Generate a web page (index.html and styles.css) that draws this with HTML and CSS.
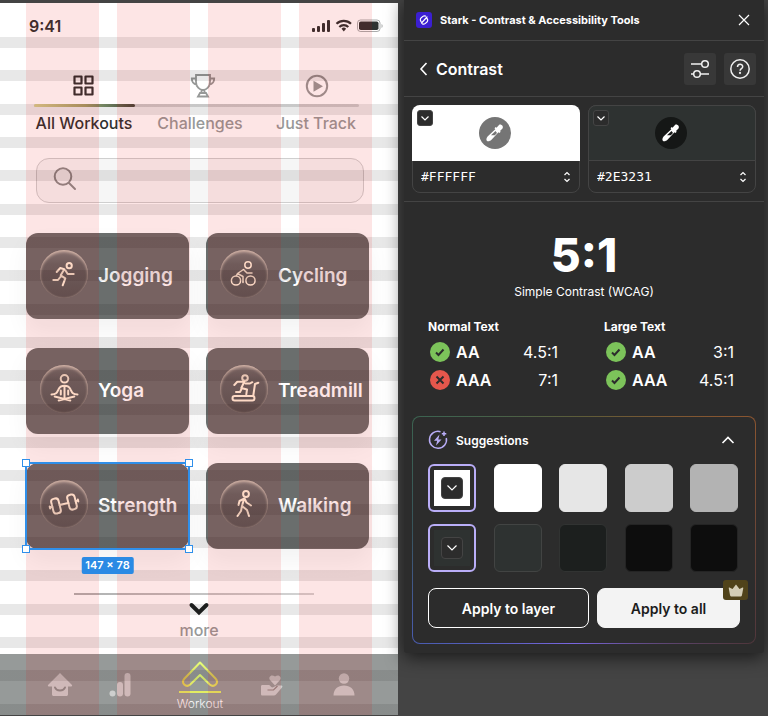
FILE: index.html
```html
<!DOCTYPE html>
<html lang="en">
<head>
  <meta charset="UTF-8" />
  <meta name="viewport" content="width=device-width, initial-scale=1.0"/>
  <title>Stark - Contrast &amp; Accessibility Tools</title>
  <link rel="stylesheet" href="styles.css">
</head>
<body>
  <main class="phone">
    <header class="status">
      <span>9:41</span>
      <svg class="status-icons" width="72" height="14" viewBox="0 0 72 14">
        <g fill="#2e3231">
          <rect x="0" y="9" width="3" height="4" rx="1"/>
          <rect x="5" y="7" width="3" height="6" rx="1"/>
          <rect x="10" y="4" width="3" height="9" rx="1"/>
          <rect x="15" y="1" width="3" height="12" rx="1"/>
        </g>
        <g fill="none" stroke="#2e3231" stroke-width="2.2">
          <path d="M24.500 4.800a10.500 10.500 0 0 1 14.500 0"/>
          <path d="M27.300 8a6.500 6.500 0 0 1 9 0"/>
        </g>
        <path d="M29.500 9.800a3.200 3.200 0 0 1 4.600 0L31.800 12.500z" fill="#2e3231"/>
        <rect x="45.500" y="1" width="22.500" height="11.500" rx="3" fill="none" stroke="#2e3231" opacity=".4"/>
        <rect x="47" y="2.500" width="19.500" height="8.500" rx="1.800" fill="#2e3231"/>
        <path d="M69.500 5v4c1.600-.7 1.600-3.300 0-4z" fill="#2e3231" opacity=".4"/>
      </svg>
    </header>

    <nav class="tabs">
      <a href="#" class="tab active">
        <svg width="24" height="24" viewBox="0 0 24 24" fill="none" stroke="currentColor" stroke-width="2.200">
          <path d="M2.500 2.500h7v7h-7zM13.500 2.500h7v7h-7zM2.500 13.500h7v7h-7zM13.500 13.500h7v7h-7z" stroke-linejoin="round"/>
        </svg>
        All Workouts
      </a>
      <a href="#" class="tab">
        <svg width="24" height="24" viewBox="-2 0 24 24" fill="none" stroke="currentColor" stroke-width="1.800">
          <path d="M6 1h14v7c0 5-4 8-7 8s-7-3-7-8zM6 4.500H1.800c0 3.500 1.500 5.500 5 6M20 4.500h4.200c0 3.500-1.500 5.500-5 6M12 16l-1 3M14 16l1 3M10 19h6l2 3.500H8z"/>
        </svg>
        Challenges
      </a>
      <a href="#" class="tab">
        <svg width="24" height="24" viewBox="0 0 24 24">
          <circle cx="13" cy="12" r="10.200" fill="none" stroke="currentColor" stroke-width="2"/>
          <path d="M9.500 6.800v11l9.500-5.500z" fill="currentColor"/>
        </svg>
        Just Track
      </a>
      <div class="track"><div class="track-fill"></div></div>
    </nav>

    <div class="search">
      <svg width="24" height="24" viewBox="0 0 24 24" fill="none" stroke="#8b8c8b" stroke-width="2" stroke-linecap="round">
        <circle cx="10" cy="9.500" r="8.300"/>
        <path d="M16 16l6 6"/>
      </svg>
      <input type="text" aria-label="Search workouts">
    </div>

    <section class="cards">
      <article class="card">
        <span class="disc">
          <svg width="28" height="28" viewBox="0 0 28 28">
            <circle cx="19.200" cy="5.700" r="2.600"/>
            <path d="M6.700 12l3.600-4 4 1.300-3.600 6 4.600 3-2.600 7M15.500 10.500l2.200 3.500h6M3.300 20H8l2.300-3"/>
          </svg>
        </span>
        <h2>Jogging</h2>
      </article>
      <article class="card">
        <span class="disc">
          <svg class="thin" width="28" height="28" viewBox="0 0 28 28">
            <circle cx="18" cy="5" r="3.200"/>
            <circle cx="6" cy="20.500" r="4.600"/>
            <circle cx="20.500" cy="20.500" r="4.600"/>
            <path d="M22 13h-5l-3.500-3.500-6 4 5.500 3v6M7.500 13.500l-1 2"/>
          </svg>
        </span>
        <h2>Cycling</h2>
      </article>
      <article class="card">
        <span class="disc">
          <svg width="28" height="28" viewBox="0 0 28 28">
            <circle cx="14.500" cy="3.800" r="3.800"/>
            <path d="M1.500 19.500c5 0 5.500-2 7-5.200 1-2.500 2.500-3.600 6-3.600s5 1.100 6 3.600c1.500 3.200 2 5.200 7 5.200M14.500 11v12M10.800 15.500v4M18.200 15.500v4M4.700 21.500l15.600 4M24.300 21.500l-15.600 4"/>
          </svg>
        </span>
        <h2>Yoga</h2>
      </article>
      <article class="card">
        <span class="disc">
          <svg width="28" height="28" viewBox="0 0 28 28">
            <circle cx="15" cy="3" r="2.800"/>
            <path d="M4.300 10l3-3.200h7l-3 6.200 5.700 1.500-.7 4.800M15.500 8.500h4.500l2.300-1.300M6 17h4l1.500-3M28.300 7.700L25 9l-1.700 11.500"/>
            <rect x="2.500" y="21" width="22" height="4.500" rx="2.200"/>
          </svg>
        </span>
        <h2>Treadmill</h2>
      </article>
      <article class="card selected">
        <span class="disc">
          <svg width="30" height="28" viewBox="0 0 30 28">
            <g transform="rotate(-14 15 14)">
              <rect x="3" y="6.500" width="7.500" height="15" rx="3"/>
              <rect x="19.500" y="6.500" width="7.500" height="15" rx="3"/>
              <path d="M10.500 14h9M.5 13v2M.5 14H3M27 14h2.500M29.500 13v2"/>
            </g>
          </svg>
        </span>
        <h2>Strength</h2>
        <div class="selection">
          <i class="handle"></i><i class="handle"></i><i class="handle"></i><i class="handle"></i>
          <span class="size">147 × 78</span>
        </div>
      </article>
      <article class="card">
        <span class="disc">
          <svg width="28" height="28" viewBox="0 0 28 28">
            <circle cx="16" cy="4" r="2.900"/>
            <path d="M8.500 15l1-4 5-2.500 2 4 4.500 3M14 9l-2 7 5 4 2 6M12 16l-1 5-3.500 5"/>
          </svg>
        </span>
        <h2>Walking</h2>
      </article>
    </section>

    <div class="more">
      <hr>
      <a href="#">
        <svg width="20" height="14" viewBox="0 0 20 14" fill="none" stroke="#1f2221" stroke-width="4" stroke-linecap="round">
          <path d="M2.500 3l7.500 7.500L17.500 3"/>
        </svg>
        more
      </a>
    </div>

    <nav class="bottom">
      <a href="#" aria-label="Home">
        <svg width="24" height="24" viewBox="0 0 24 24">
          <path d="M12 0L24 12c.5 1-.5 1.500-1.500 1.500H20V21c0 1.500-.5 2-2 2H6c-1.500 0-2-.5-2-2v-7.500H1.500C.5 13.500-.5 13 0 12z" fill="currentColor"/>
          <path d="M7 14.500c1.500 4 8.500 4 10 0" fill="none" stroke="#8b8e8d" stroke-width="2" stroke-linecap="round"/>
        </svg>
      </a>
      <a href="#" aria-label="Progress">
        <svg width="24" height="24" viewBox="0 0 24 24" fill="currentColor">
          <circle cx="4.500" cy="20.500" r="3"/>
          <rect x="9" y="9" width="6" height="14.500" rx="3"/>
          <rect x="16.500" y="0" width="6" height="23.500" rx="3"/>
        </svg>
      </a>
      <a href="#" class="workout">
        <svg width="44" height="32" viewBox="0 0 44 32" fill="none" stroke="url(#lime)" stroke-width="2">
          <defs>
            <linearGradient id="lime" gradientUnits="userSpaceOnUse" x1="4" y1="0" x2="40" y2="0">
              <stop offset="0" stop-color="#e0d050"/>
              <stop offset=".5" stop-color="#e4ff78"/>
              <stop offset="1" stop-color="#e2da58"/>
            </linearGradient>
          </defs>
          <path d="M22 1.500l15.500 16c2 2.200 1.800 4.500.3 6-1.700 1.700-4 1.800-6 0L22 14l-9.800 9.500c-2 1.800-4.300 1.700-6 0-1.500-1.500-1.700-3.800.3-6z" stroke-linejoin="round"/>
          <rect x="1" y="30" width="42" height="2" fill="#e2ee62" stroke="none"/>
        </svg>
        Workout
      </a>
      <a href="#" aria-label="Wellbeing">
        <svg width="24" height="24" viewBox="0 0 24 24" fill="currentColor">
          <path d="M15 12.500L10 7C8 4.500 11 .5 15 3.500 19 .5 22 4.500 20 7z"/>
          <path d="M2.500 12H9c1.500 0 1.500 2.500 3.500 2.500L17 12.500h4.500c1 0 1.200 1 .5 2l-6 7c-.8.800-1.500 1-2.500 1h-11c-1 0-1.500-.5-1.500-1.500v-7.500c0-1 .5-1.500 1.500-1.500z"/>
          <path d="M7.500 17h6l4-4" fill="none" stroke="#8f8584" stroke-width="1.200"/>
        </svg>
      </a>
      <a href="#" aria-label="Profile">
        <svg width="24" height="24" viewBox="0 0 24 24" fill="currentColor">
          <circle cx="12" cy="5.500" r="5.200"/>
          <path d="M1.500 22.500C1.500 16 6 12.500 12 12.500s10.500 3.500 10.500 10z"/>
        </svg>
      </a>
    </nav>

    <!-- layout grid drawn over the frame -->
    <div class="grid-rows"></div>
    <div class="grid-cols"><i></i><i></i><i></i><i></i></div>
  </main>

  <aside class="plugin">
    <header class="plugin-bar">
      <svg width="16" height="16" viewBox="0 0 16 16">
        <rect width="16" height="16" rx="3" fill="#3b1fd1"/>
        <path d="M5 9.500a2.600 2.600 0 0 1 .300-3.800l1.600-1.300a2.500 2.500 0 0 1 2.600-.3M5.500 11l5.500-6M11 6.500a2.600 2.600 0 0 1-.3 3.800l-1.600 1.300a2.500 2.500 0 0 1-2.600.3" fill="none" stroke="#fff" stroke-width="1.200" stroke-linecap="round"/>
      </svg>
      <h1>Stark - Contrast &amp; Accessibility Tools</h1>
      <button class="close" aria-label="Close">
        <svg width="12" height="12" viewBox="0 0 12 12" stroke="#fff" stroke-width="1.200"><path d="M1 1l10 10M11 1L1 11"/></svg>
      </button>
    </header>

    <div class="title-row">
      <button class="back">
        <svg width="8" height="12" viewBox="0 0 8 12" fill="none" stroke="#fff" stroke-width="1.600"><path d="M6.500 0L1 6l5.500 6"/></svg>
        Contrast
      </button>
      <button class="tool" aria-label="Settings">
        <svg width="20" height="20" viewBox="0 0 20 20" fill="none" stroke="#f0f0f0" stroke-width="1.500">
          <path d="M1 5h10M19 15H10M4 15H1"/><circle cx="15" cy="5" r="3.300"/><circle cx="7" cy="15" r="3.300"/>
        </svg>
      </button>
      <button class="tool" aria-label="Help">
        <svg width="20" height="20" viewBox="0 0 20 20" fill="none" stroke="#f0f0f0" stroke-width="1.500">
          <circle cx="10" cy="10" r="9.200"/>
          <path d="M7.500 8c0-3.500 5.200-3.500 5.200-.3 0 2-2.600 2-2.600 4"/>
          <circle cx="10" cy="14" r=".4"/>
        </svg>
      </button>
    </div>

    <div class="colors">
      <div class="color">
        <div class="sample light">
          <button class="drop" aria-label="Foreground options"><svg width="8" height="5" viewBox="0 0 8 5"><path d="M.5.500L4 4 7.500.500"/></svg></button>
          <button class="picker" aria-label="Pick foreground">
            <svg width="18" height="18" viewBox="0 0 18 18"><path d="M13 1c2-1.500 5 1.500 3.500 3.500L14 7l.7.800-1.200 1.200-1-.8-7 7.500c-1.500 1.500-3.700 2-4.700 1-.8-1-.4-3 1-4.500l7.500-7-.8-1L9.700 3l.8.700z" fill="#fff"/><path d="M9.500 7L5 11.300h3.800L11 9z" class="hole"/></svg>
          </button>
        </div>
        <div class="hex">
          <input type="text" value="#FFFFFF" aria-label="Foreground color">
          <svg width="8" height="12" viewBox="0 0 8 12"><path d="M1.500 4L4 1.500 6.500 4M1.500 8L4 10.500 6.500 8"/></svg>
        </div>
      </div>
      <div class="color">
        <div class="sample dark">
          <button class="drop" aria-label="Background options"><svg width="8" height="5" viewBox="0 0 8 5"><path d="M.5.500L4 4 7.500.500"/></svg></button>
          <button class="picker" aria-label="Pick background">
            <svg width="18" height="18" viewBox="0 0 18 18"><path d="M13 1c2-1.500 5 1.500 3.500 3.500L14 7l.7.800-1.200 1.200-1-.8-7 7.500c-1.500 1.500-3.700 2-4.700 1-.8-1-.4-3 1-4.500l7.500-7-.8-1L9.700 3l.8.700z" fill="#fff"/><path d="M9.500 7L5 11.300h3.800L11 9z" class="hole"/></svg>
          </button>
        </div>
        <div class="hex">
          <input type="text" value="#2E3231" aria-label="Background color">
          <svg width="8" height="12" viewBox="0 0 8 12"><path d="M1.500 4L4 1.500 6.500 4M1.500 8L4 10.500 6.500 8"/></svg>
        </div>
      </div>
    </div>

    <div class="score">
      <strong>5:1</strong>
      <p>Simple Contrast (WCAG)</p>
    </div>

    <div class="levels">
      <section>
        <h3>Normal Text</h3>
        <div class="level">
          <svg width="20" height="20" viewBox="0 0 20 20"><circle cx="10" cy="10" r="10" fill="#7cc35a"/><path d="M6 10.500l2.500 2.500 5-5.500"/></svg>
          <b>AA</b><span>4.5:1</span>
        </div>
        <div class="level">
          <svg width="20" height="20" viewBox="0 0 20 20"><circle cx="10" cy="10" r="10" fill="#e5574c"/><path d="M6.500 6.500l7 7M13.500 6.500l-7 7"/></svg>
          <b>AAA</b><span>7:1</span>
        </div>
      </section>
      <section>
        <h3>Large Text</h3>
        <div class="level">
          <svg width="20" height="20" viewBox="0 0 20 20"><circle cx="10" cy="10" r="10" fill="#7cc35a"/><path d="M6 10.500l2.500 2.500 5-5.500"/></svg>
          <b>AA</b><span>3:1</span>
        </div>
        <div class="level">
          <svg width="20" height="20" viewBox="0 0 20 20"><circle cx="10" cy="10" r="10" fill="#7cc35a"/><path d="M6 10.500l2.500 2.500 5-5.500"/></svg>
          <b>AAA</b><span>4.5:1</span>
        </div>
      </section>
    </div>

    <section class="suggestions">
      <button class="suggest-head">
        <svg width="20" height="20" viewBox="0 0 20 20" fill="none" stroke="#b9adf7" stroke-width="1.500">
          <path d="M12.500 1.700A8.500 8.500 0 1 0 18.300 8"/>
          <path d="M11.500 4.500L6 10.800h3.200L8 15.500l5.500-6h-3.200z" fill="#b9adf7" stroke="none"/>
          <path d="M16 1.500v4.500M13.800 3.700h4.500"/>
        </svg>
        Suggestions
        <svg class="fold" width="12" height="8" viewBox="0 0 12 8" fill="none" stroke="#fff" stroke-width="1.600"><path d="M.5 7L6 1.500 11.500 7"/></svg>
      </button>

      <div class="swatches">
        <button class="swatch current white" aria-label="Current foreground"><i><svg width="12" height="8" viewBox="0 0 12 8"><path d="M1.500 1.500L6 6l4.500-4.500"/></svg></i></button>
        <button class="swatch w1" aria-label="White"></button>
        <button class="swatch w2" aria-label="Gray 90"></button>
        <button class="swatch w3" aria-label="Gray 80"></button>
        <button class="swatch w4" aria-label="Gray 70"></button>
      </div>
      <div class="swatches">
        <button class="swatch current" aria-label="Current background"><i><svg width="12" height="8" viewBox="0 0 12 8"><path d="M1.500 1.500L6 6l4.500-4.500"/></svg></i></button>
        <button class="swatch d1" aria-label="Slate"></button>
        <button class="swatch d2" aria-label="Dark slate"></button>
        <button class="swatch d3" aria-label="Near black"></button>
        <button class="swatch d3" aria-label="Black"></button>
      </div>

      <div class="actions">
        <button class="apply">Apply to layer</button>
        <button class="apply solid">
          Apply to all
          <span class="crown">
            <svg width="16" height="13" viewBox="0 0 16 13"><path d="M1.500 3.500L4.500 5 8 .500 11.500 5l3-1.500c.5-.2.900.1.800.600L14 11c-.2 1-.8 1.500-1.700 1.500H3.700C2.800 12.500 2.200 12 2 11L.7 4.100c-.1-.5.300-.8.800-.6z" fill="#d3cdb6"/></svg>
          </span>
        </button>
      </div>
    </section>
  </aside>
</body>
</html>
```
FILE: styles.css
```css
* {
  box-sizing: border-box;
}

body {
  margin: 0;
  min-height: 100vh;
  display: flex;
  align-items: flex-start;
  background: #444;
  font-family: Inter, "Liberation Sans", sans-serif;
}

a {
  color: inherit;
  text-decoration: none;
}

button {
  padding: 0;
  border: none;
  background: none;
  color: inherit;
  font: inherit;
  cursor: pointer;
}

svg {
  display: block;
  flex: none;
  overflow: visible;
}

h1, h2, h3, p {
  margin: 0;
}

/* phone frame */
.phone {
  position: relative;
  isolation: isolate;
  flex: 1;
  margin-top: 3px;
  background: #fff;
  color: #2e3231;
}

.status {
  display: flex;
  justify-content: space-between;
  align-items: center;
  padding: 13px 14px 0 29px;
  font-size: 16px;
  line-height: 20px;
  font-weight: 600;
}

.tabs {
  position: relative;
  display: grid;
  grid-template-columns: repeat(3, 1fr);
  padding: 38px 24px 0 26px;
}

.tab {
  display: flex;
  flex-direction: column;
  align-items: center;
  gap: 15px;
  font-size: 16px;
  line-height: 20px;
  font-weight: 500;
  color: #979998;
  white-space: nowrap;
}

.tab.active {
  color: #2e3231;
}

.track {
  position: absolute;
  left: 34px;
  right: 39px;
  bottom: 26px;
  height: 3px;
  border-radius: 2px;
  background: #dcdcdc;
}

.track-fill {
  width: 31%;
  height: 3px;
  border-radius: 2px;
  background: linear-gradient(90deg, #e6e29c, #b0ac70 50%, #7a8f6a 70%, #4a4a3e);
}

.search {
  display: flex;
  align-items: center;
  gap: 12px;
  height: 45px;
  margin: 25px 34px 30px 36px;
  padding: 0 16px;
  border: 1px solid #cfcfcf;
  border-radius: 13px;
  background: #f6f6f6;
}

.search svg {
  margin-top: -4px;
}

.search input {
  flex: 1;
  min-width: 0;
  border: none;
  outline: none;
  background: none;
  font: inherit;
}

.cards {
  display: grid;
  grid-template-columns: 1fr 1fr;
  gap: 29px 17px;
  padding: 0 29px 0 26px;
}

.card {
  position: relative;
  display: flex;
  align-items: center;
  gap: 10px;
  height: 86px;
  padding: 0 6px 4px 14px;
  border-radius: 12px;
  background: #6a6e6d;
  box-shadow: 0 12px 24px rgba(0, 0, 0, 0.05);
  color: #fff;
}

.card h2 {
  padding-top: 4px;
  font-size: 19px;
  line-height: 24px;
  font-weight: 600;
}

.disc {
  display: flex;
  flex: none;
  align-items: center;
  justify-content: center;
  width: 48px;
  height: 48px;
  border-radius: 50%;
  background: linear-gradient(#7b7d7b, #626665 30%, #545857);
  box-shadow: inset 0 2px 3px rgba(255, 240, 220, 0.6), inset 0 0 2px rgba(255, 240, 220, 0.4);
}

.disc svg {
  fill: none;
  stroke: #fff2dc;
  stroke-width: 2;
  stroke-linecap: round;
  stroke-linejoin: round;
}

.disc .thin {
  stroke-width: 1.5;
}

.selection {
  position: absolute;
  inset: -1px;
  z-index: 2;
  border: 2px solid #2f8fea;
}

.handle {
  position: absolute;
  width: 8px;
  height: 8px;
  border: 1px solid #2f8fea;
  background: #fff;
}

.handle:nth-child(1) { top: -5px; left: -5px; }
.handle:nth-child(2) { top: -5px; right: -5px; }
.handle:nth-child(3) { bottom: -5px; left: -5px; }
.handle:nth-child(4) { bottom: -5px; right: -5px; }

.size {
  position: absolute;
  top: calc(100% + 9px);
  left: 50%;
  transform: translateX(-50%);
  padding: 0 4px;
  border-radius: 2px;
  background: #2a8ae4;
  font-size: 11px;
  line-height: 17px;
  font-weight: 600;
  white-space: nowrap;
}

.more {
  padding: 44px 0 14px;
}

.more hr {
  width: 240px;
  height: 2px;
  margin: 0 auto 7px 74px;
  border: none;
  background: linear-gradient(90deg, #b0b0b0, #d4d4d4);
}

.more a {
  display: flex;
  flex-direction: column;
  align-items: center;
  gap: 4px;
  font-size: 16px;
  line-height: 20px;
  font-weight: 500;
  color: #979998;
}

.bottom {
  display: grid;
  grid-template-columns: 48fr 72fr 88fr 56fr 88fr;
  align-items: center;
  justify-items: center;
  height: 61px;
  padding: 0 10px 0 36px;
  background: #969a99;
  color: #cdcfce;
}

.workout {
  display: flex;
  flex-direction: column;
  align-items: center;
  gap: 3px;
  padding-top: 4px;
  font-size: 12px;
  line-height: 16px;
  font-weight: 300;
  color: #fff;
}

.grid-rows,
.grid-cols {
  position: absolute;
  inset: 0;
  z-index: 1;
  pointer-events: none;
}

.grid-rows {
  top: 34px;
  background: repeating-linear-gradient(
    rgba(0, 0, 0, 0.09) 0 11px, transparent 11px 33px,
    rgba(0, 0, 0, 0.09) 33px 44px, transparent 44px 67px,
    rgba(0, 0, 0, 0.09) 67px 78px, transparent 78px 100px
  );
}

.grid-cols {
  display: grid;
  grid-template-columns: repeat(4, 1fr);
  gap: 18px;
  padding: 0 26px;
}

.grid-cols i {
  background: rgba(235, 0, 0, 0.1);
}

/* plugin window */
.plugin {
  position: relative;
  z-index: 1;
  flex: 0 0 360px;
  margin: 0 4px 0 6px;
  padding-bottom: 9px;
  border-radius: 0 0 3px 3px;
  background: #2c2c2c;
  box-shadow: 0 4px 18px rgba(0, 0, 0, 0.65);
  color: #fff;
}

.plugin-bar {
  display: flex;
  align-items: center;
  gap: 8px;
  height: 41px;
  padding: 0 14px 0 12px;
  border-bottom: 1px solid #444;
}

.plugin-bar h1 {
  flex: 1;
  font-size: 11px;
  line-height: 16px;
  font-weight: 700;
}

.title-row {
  display: flex;
  align-items: center;
  gap: 8px;
  height: 56px;
  padding: 0 8px 0 16px;
  border-bottom: 1px solid #444;
}

.back {
  display: flex;
  align-items: center;
  gap: 8px;
  margin-right: auto;
  font-size: 16px;
  line-height: 24px;
  font-weight: 600;
}

.tool {
  display: flex;
  align-items: center;
  justify-content: center;
  width: 32px;
  height: 32px;
  border-radius: 3px;
  background: #383838;
}

.colors {
  display: grid;
  grid-template-columns: 1fr 1fr;
  gap: 8px;
  padding: 8px;
  border-bottom: 1px solid #444;
}

.color {
  border: 1px solid #444;
  border-radius: 8px;
}

.sample {
  position: relative;
  display: flex;
  align-items: center;
  justify-content: center;
  height: 56px;
  margin: -1px -1px 0;
  border-radius: 8px 8px 0 0;
}

.light {
  background: #fff;
}

.dark {
  border: 1px solid #444;
  background: #2e3231;
}

.drop {
  position: absolute;
  top: 5px;
  left: 5px;
  display: flex;
  align-items: center;
  justify-content: center;
  width: 16px;
  height: 16px;
  border: 1px solid #444;
  border-radius: 3px;
  background: #2c2c2c;
}

.dark .drop {
  top: 4px;
  left: 4px;
}

.drop path,
.hex path,
.swatch path {
  fill: none;
  stroke: #fff;
  stroke-width: 1.2;
}

.picker {
  display: flex;
  align-items: center;
  justify-content: center;
  width: 32px;
  height: 32px;
  margin-right: 2px;
  border-radius: 50%;
  background: #757575;
}

.dark .picker {
  background: #151716;
}

.hole {
  fill: #757575;
}

.dark .hole {
  fill: #151716;
}

.hex {
  display: flex;
  align-items: center;
  justify-content: space-between;
  height: 31px;
  padding: 0 8px;
}

.hex input {
  width: 100px;
  padding: 0;
  border: none;
  outline: none;
  background: none;
  color: #fff;
  font-family: "DejaVu Sans Mono", monospace;
  font-size: 13px;
}

.score {
  padding: 29px 0 0;
  text-align: center;
}

.score strong {
  display: block;
  font-size: 46px;
  line-height: 48px;
  font-weight: 800;
}

.score p {
  padding-top: 5px;
  font-size: 12px;
  line-height: 16px;
}

.levels {
  display: grid;
  grid-template-columns: 1fr 1fr;
  gap: 8px;
  padding: 19px 8px 26px;
}

.levels section {
  padding: 0 22px 0 16px;
}

.levels h3 {
  margin-bottom: 7px;
  font-size: 12px;
  line-height: 16px;
  font-weight: 700;
}

.level {
  display: flex;
  align-items: center;
  gap: 6px;
  height: 20px;
  padding-left: 2px;
  font-size: 16px;
}

.level + .level {
  margin-top: 8px;
}

.level b {
  flex: 1;
  font-weight: 600;
}

.level path {
  fill: none;
  stroke: #2c2c2c;
  stroke-width: 2;
}

.suggestions {
  margin: 0 8px;
  padding: 15px;
  border: 1px solid transparent;
  border-radius: 8px;
  background:
    linear-gradient(#2c2c2c, #2c2c2c) padding-box,
    conic-gradient(#5f5c38, #8a5530 56deg, #4f363c 124deg, #7a66e0 185deg, #4a5cb0 236deg, #38545c 270deg, #3c6350 304deg, #5f5c38) border-box;
}

.suggest-head {
  display: flex;
  align-items: center;
  gap: 8px;
  width: 100%;
  height: 16px;
  padding-right: 6px;
  font-size: 12px;
  font-weight: 600;
}

.fold {
  margin-left: auto;
}

.swatches {
  display: flex;
  justify-content: space-between;
  margin-top: 12px;
  padding-right: 2px;
}

.suggest-head + .swatches {
  margin-top: 16px;
}

.swatch {
  width: 48px;
  height: 48px;
  border: 1px solid #3a3c3b;
  border-radius: 6px;
}

.w1 { background: #fff; border-color: #fff; }
.w2 { background: #e6e6e6; border-color: #e6e6e6; }
.w3 { background: #ccc; border-color: #ccc; }
.w4 { background: #b3b3b3; border-color: #b3b3b3; }
.d1 { background: #2e3231; border-color: #424443; }
.d2 { background: #1c1f1e; border-color: #313332; }
.d3 { background: #0d0d0d; border-color: #242424; }

.current {
  padding: 4px;
  border: 2px solid #b9adf7;
  background: #2e3231 content-box;
}

.current.white {
  background: #fff content-box;
}

.current i {
  display: flex;
  align-items: center;
  justify-content: center;
  width: 22px;
  height: 22px;
  margin: 0 auto;
  border: 1px solid #444;
  border-radius: 4px;
  background: #2c2c2c;
}

.actions {
  display: grid;
  grid-template-columns: 161fr 143fr;
  gap: 8px;
  margin-top: 16px;
}

.apply {
  position: relative;
  height: 40px;
  border: 1px solid #fff;
  border-radius: 8px;
  font-size: 14px;
  font-weight: 600;
}

.solid {
  border-color: #f3f3f3;
  background: #f3f3f3;
  color: #1c1c1c;
}

.crown {
  position: absolute;
  top: -9px;
  right: -9px;
  display: flex;
  align-items: center;
  justify-content: center;
  width: 25px;
  height: 20px;
  border-radius: 3px;
  background: #50431a;
}
```
